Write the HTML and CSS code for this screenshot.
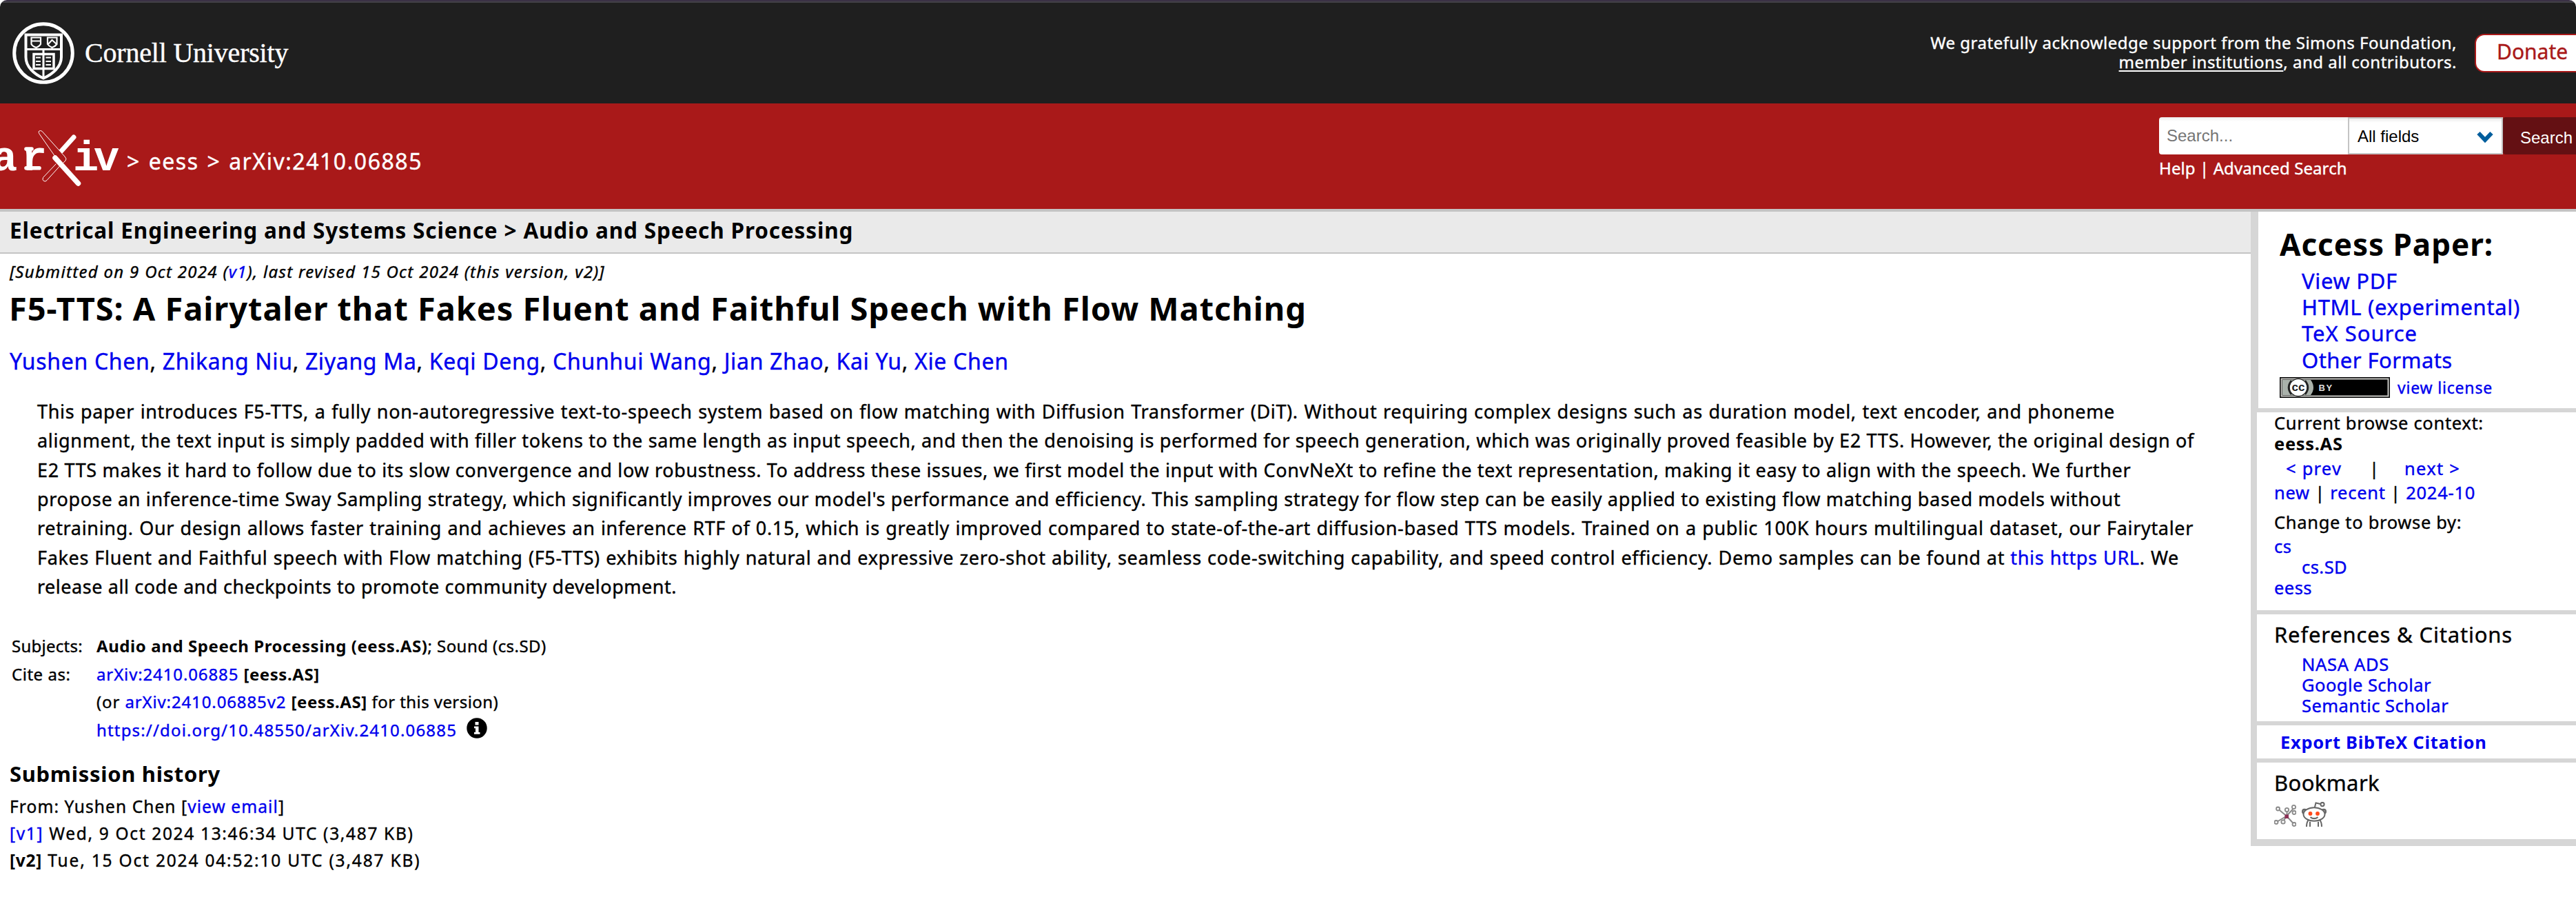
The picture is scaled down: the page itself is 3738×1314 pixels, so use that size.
FILE: index.html
```html
<!DOCTYPE html>
<html lang="en">
<head>
<meta charset="utf-8">
<title>[2410.06885] F5-TTS: A Fairytaler that Fakes Fluent and Faithful Speech with Flow Matching</title>
<link rel="stylesheet" href="styles.css">
</head>
<body>
<header>
  <div class="topbar">
    <a class="cornell" href="#">
      <svg class="seal" viewBox="0 0 90 90" fill="none" stroke="#fff">
        <circle cx="45" cy="45" r="42.3" stroke-width="5"/>
        <path d="M19.500 18.500H71V51C71 65 58 76 45 81.500C32 76 19.500 65 19.500 51Z" stroke-width="4"/>
        <path d="M20 39.500H71M45 40V80" stroke-width="3"/>
        <path d="M27.500 22.500H41V32Q39 35.500 34.500 37Q29 35 27.500 32ZM51 22.500H64.500V32Q62 35.500 57.500 37Q53 35 51 32Z" stroke-width="2.200"/>
        <path d="M28 27.500H41M52 32L57.500 26L64 32" stroke-width="2"/>
        <path d="M31 46.500H60V67.500H31Z" stroke-width="3.500"/>
        <path d="M34 51.500H41M34 57H41M34 62H41M48.500 51.500H56M48.500 57H56M48.500 62H56" stroke-width="2"/>
      </svg>
      <span class="cornell-name">Cornell University</span>
    </a>
    <div class="support">
      <div>We gratefully acknowledge support from the Simons Foundation,</div>
      <div><a href="#">member institutions</a>, and all contributors.</div>
    </div>
    <a class="donate" href="#">Donate</a>
  </div>
  <div class="redbar">
    <svg class="logo" viewBox="0 0 176 95" role="img" aria-label="arXiv">
      <g class="logo-text"><text x="-12" y="66.500">a</text><text x="31" y="66.500">r</text><text x="106" y="66.500">i</text><text x="136" y="66.500">v</text></g>
      <g fill="none" stroke-linecap="round" stroke-linejoin="round">
        <path d="M38 63.700H57M38 36H46" stroke="#fff" stroke-width="5.600"/>
        <path d="M107 19L89 39" stroke="#fff" stroke-width="7"/>
        <path d="M81 58L62.500 77.500Q61 81 63.500 82.500Q66 84 68 81.500L87.500 60" stroke="#fff" stroke-width="1"/>
        <path d="M57 14Q54.500 10 58.500 9.500Q61 9.500 62.500 12L94 47Q97.500 50.500 95 53L89 59L80 47Z" fill="#a91919" stroke="#fff" stroke-width="1"/>
        <path d="M80 49L113.500 86" stroke="#fff" stroke-width="7.500"/>
      </g>
    </svg>
    <div class="crumbs">&gt; <a href="#">eess</a> &gt; arXiv:2410.06885</div>
    <form class="search">
      <div class="search-row">
        <div class="field">Search...</div>
        <div class="select">All fields
          <svg viewBox="0 0 24 18" class="chev"><path d="M2.500 3L12 13L21.500 3" fill="none" stroke="#005e9d" stroke-width="6"/></svg>
        </div>
        <div class="submit">Search</div>
      </div>
      <div class="help"><a href="#">Help</a> | <a href="#">Advanced Search</a></div>
    </form>
  </div>
</header>
<div class="page">
  <main>
    <h1 class="subject-bar">Electrical Engineering and Systems Science &gt; Audio and Speech Processing</h1>
    <div class="body">
      <div class="dateline">[Submitted on 9 Oct 2024 (<a href="#">v1</a>), last revised 15 Oct 2024 (this version, v2)]</div>
      <h1 class="title">F5-TTS: A Fairytaler that Fakes Fluent and Faithful Speech with Flow Matching</h1>
      <div class="authors"><a href="#">Yushen Chen</a>, <a href="#">Zhikang Niu</a>, <a href="#">Ziyang Ma</a>, <a href="#">Keqi Deng</a>, <a href="#">Chunhui Wang</a>, <a href="#">Jian Zhao</a>, <a href="#">Kai Yu</a>, <a href="#">Xie Chen</a></div>
      <blockquote class="abstract">
        <span class="l1">This paper introduces F5-TTS, a fully non-autoregressive text-to-speech system based on flow matching with Diffusion Transformer (DiT). Without requiring complex designs such as duration model, text encoder, and phoneme</span>
        <span class="l2">alignment, the text input is simply padded with filler tokens to the same length as input speech, and then the denoising is performed for speech generation, which was originally proved feasible by E2 TTS. However, the original design of</span>
        <span class="l3">E2 TTS makes it hard to follow due to its slow convergence and low robustness. To address these issues, we first model the input with ConvNeXt to refine the text representation, making it easy to align with the speech. We further</span>
        <span class="l4">propose an inference-time Sway Sampling strategy, which significantly improves our model's performance and efficiency. This sampling strategy for flow step can be easily applied to existing flow matching based models without</span>
        <span class="l5">retraining. Our design allows faster training and achieves an inference RTF of 0.15, which is greatly improved compared to state-of-the-art diffusion-based TTS models. Trained on a public 100K hours multilingual dataset, our Fairytaler</span>
        <span class="l6">Fakes Fluent and Faithful speech with Flow matching (F5-TTS) exhibits highly natural and expressive zero-shot ability, seamless code-switching capability, and speed control efficiency. Demo samples can be found at <a href="#">this https URL</a>. We</span>
        <span class="l7">release all code and checkpoints to promote community development.</span>
      </blockquote>
      <div class="meta">
        <div class="label">Subjects:</div><div><b>Audio and Speech Processing (eess.AS)</b><span class="tight">; Sound (cs.SD)</span></div>
        <div class="label label-cite">Cite as:</div><div><a href="#">arXiv:2410.06885</a> <b>[eess.AS]</b></div>
        <div></div><div>(or <a href="#">arXiv:2410.06885v2</a> <b>[eess.AS]</b><span class="tight"> for this version)</span></div>
        <div></div><div class="doi"><a href="#">https://doi.org/10.48550/arXiv.2410.06885</a>
          <svg class="info" viewBox="0 0 30 30"><circle cx="15" cy="15" r="14.700"/><path d="M12.500 6H17.500V10.500H12.500ZM11 12.500H17.500V21H19.500V23.800H11V21H13V15.300H11Z" fill="#fff"/></svg>
        </div>
      </div>
      <h2 class="history-title">Submission history</h2>
      <div class="history">
        <div class="from">From: Yushen Chen [<a href="#">view email</a>]</div>
        <div><a href="#">[v1]</a> Wed, 9 Oct 2024 13:46:34 UTC (3,487 KB)</div>
        <div class="v2"><b>[v2]</b> Tue, 15 Oct 2024 04:52:10 UTC (3,487 KB)</div>
      </div>
    </div>
  </main>
  <aside>
    <section class="access">
      <h2>Access Paper:</h2>
      <ul>
        <li><a href="#">View PDF</a></li>
        <li><a href="#">HTML (experimental)</a></li>
        <li class="tex"><a href="#">TeX Source</a></li>
        <li class="other"><a href="#">Other Formats</a></li>
      </ul>
      <div class="license">
        <svg viewBox="0 0 160 30" class="badge">
          <rect width="160" height="30"/>
          <rect x="2.500" y="2.500" width="155" height="25" fill="none" stroke="#c8c8c4" stroke-width="2"/>
          <path d="M4 4H45Q53 15 45 26H4Z" fill="#aab2ab"/>
          <circle cx="27" cy="15" r="13"/>
          <ellipse cx="27" cy="15" rx="12.300" ry="12" fill="#fff"/>
          <path d="M17 5Q9 15 17 25M37 5Q45 15 37 25" fill="none" stroke="#222" stroke-width="2.500"/>
          <text x="17.500" y="20" class="cc">cc</text>
          <text x="56.500" y="19.700" class="by">BY</text>
        </svg>
        <a href="#">view license</a>
      </div>
    </section>
    <section class="browse">
      <div>Current browse context:</div>
      <div class="current"><b>eess.AS</b></div>
      <div class="prevnext"><a href="#">&lt; prev</a><span>|</span><a href="#">next &gt;</a></div>
      <div class="list"><a href="#">new</a> | <a href="#">recent</a> | <a href="#">2024-10</a></div>
      <div class="change">Change to browse by:</div>
      <div class="tree"><a href="#">cs</a><a class="sub" href="#">cs.SD</a><a href="#">eess</a></div>
    </section>
    <section class="refs">
      <h3>References &amp; Citations</h3>
      <ul>
        <li class="nasa"><a href="#">NASA ADS</a></li>
        <li><a href="#">Google Scholar</a></li>
        <li><a href="#">Semantic Scholar</a></li>
      </ul>
    </section>
    <section class="export"><a href="#">Export BibTeX Citation</a></section>
    <section class="bookmark">
      <h3>Bookmark</h3>
      <div class="icons">
        <svg class="bibsonomy" viewBox="0 0 32 31" fill="none" stroke="#8a8a8a">
          <path d="M18 16L6 6M18 16L19 8M18 16L29 4M18 16L3 25M18 16L13 24M18 16L29 28" stroke-width="2"/>
          <g stroke-width="1.800" fill="#fff"><circle cx="5.500" cy="5.500" r="2.500"/><circle cx="18.500" cy="7" r="2.700"/><circle cx="28.500" cy="3" r="2.600"/><circle cx="29" cy="11" r="2.500"/><circle cx="3" cy="25" r="2.500"/><circle cx="13" cy="24.500" r="2.700"/><circle cx="29" cy="28" r="2.500"/></g>
          <rect x="15.500" y="14" width="5.500" height="5.500" fill="#8c2f55" stroke="none"/>
        </svg>
        <svg class="reddit" viewBox="0 0 36 35" preserveAspectRatio="none" fill="none" stroke="#666" stroke-width="2">
          <path d="M18.500 9L20.500 1.500L27 3"/><circle cx="30" cy="3.500" r="2.600"/>
          <path d="M10 25Q7 29 7 35M26 25Q29 29 29 35M12 28V35M24 28V35"/>
          <circle cx="4" cy="13.500" r="3" fill="#999"/><circle cx="32" cy="13.500" r="3" fill="#999"/>
          <ellipse cx="18" cy="17.500" rx="15.500" ry="9.500" fill="#fff"/>
          <path d="M12.500 21.500Q18 25.500 23.500 21.500"/>
          <g fill="#ff4a1c" stroke="none"><circle cx="12.500" cy="16.500" r="2.900"/><circle cx="23" cy="16.500" r="2.900"/></g>
        </svg>
      </div>
    </section>
  </aside>
</div>
</body>
</html>
```
FILE: styles.css
```css
* { box-sizing: border-box; }
body {
  margin: 0;
  height: 1314px;
  overflow: hidden;
  background: #fff;
  color: #000;
  font-family: "Noto Sans", "Open Sans", sans-serif;
  font-weight: 400;
  -webkit-text-stroke: 0.4px;
  white-space: nowrap;
}
h1, h2, h3, ul, blockquote { margin: 0; padding: 0; }
h1, h2, b, svg, .search-row { -webkit-text-stroke: 0; }
ul { list-style: none; }
svg { display: block; }
a { color: #0000ee; text-decoration: none; }

/* Cornell banner */
header { background: #fff; }
.topbar {
  height: 150px;
  display: flex;
  align-items: flex-start;
  background: linear-gradient(#3a3145 2px, #424046 2px, #424046 4px, #1f1f1f 4px);
  border-radius: 10px 10px 0 0;
  color: #fff;
}
.cornell { display: flex; gap: 15px; margin: 32px 0 0 18px; color: #fff; }
.seal { width: 90px; height: 90px; }
.cornell-name {
  font: 400 40px/90px "Liberation Serif", serif;
  letter-spacing: -0.005em;
}
.support {
  margin: 48px 26px 0 auto;
  font-size: 24px;
  line-height: 28px;
  letter-spacing: 0.0205em;
  text-align: right;
}
.support a { color: #fff; text-decoration: underline; text-underline-offset: 3px; }
.donate {
  width: 147px;
  height: 56px;
  margin-top: 49px;
  padding-left: 30px;
  border: 2px solid #a91919;
  border-right: 0;
  border-radius: 14px 0 0 14px;
  background: #fff;
  color: #a91919;
  font-size: 30px;
  line-height: 47px;
}

/* arXiv bar */
.redbar {
  height: 157px;
  display: flex;
  align-items: flex-start;
  background: #a91919;
  border-bottom: 4px solid #c4c4c4;
  color: #fff;
}
.logo { width: 176px; height: 95px; margin-top: 30px; }
.logo-text { fill: #fff; font: bold 62px "Liberation Mono", monospace; }
.crumbs {
  margin: 64px 0 0 8px;
  font-size: 32px;
  line-height: 40px;
  letter-spacing: 0.0479em;
  word-spacing: 2px;
}
.crumbs a, .help a { color: #fff; }
.search { width: 605px; margin: 20px 0 0 auto; }
.search-row {
  display: flex;
  height: 54px;
  font: 24px/53px "Liberation Sans", sans-serif;
}
.field {
  width: 274px;
  padding-left: 11px;
  background: linear-gradient(#ededed, #fff 6px);
  border-radius: 4px 0 0 4px;
  color: #757575;
}
.select {
  width: 225px;
  display: flex;
  align-items: center;
  justify-content: space-between;
  padding: 0 12px 0;
  border: 2px solid #c4c4c4;
  background: linear-gradient(#ededed, #fff 6px);
  color: #000;
}
.chev { width: 24px; height: 18px; margin-top: 4px; }
.submit {
  flex: 1;
  padding-left: 25px;
  border-radius: 4px 0 0 4px;
  background: #641013;
  line-height: 60px;
}
.help { margin-top: 5px; font-size: 24px; line-height: 30px; letter-spacing: 0.004em; }

/* Main column */
.page { display: flex; align-items: flex-start; }
main { width: 3266px; }
.subject-bar {
  height: 61px;
  padding-left: 14px;
  background: #eaeaea;
  border-bottom: 2px solid #c4c4c4;
  font-size: 31.500px;
  line-height: 53px;
  letter-spacing: 0.027em;
}
.body { padding-left: 14px; }
.dateline { font-size: 24px; line-height: 51px; font-style: italic; letter-spacing: 0.0545em; }
.title { margin-left: -1px; font-size: 47px; line-height: 57px; letter-spacing: 0.02em; }
.authors { margin-top: 28px; font-size: 32px; line-height: 40px; letter-spacing: 0.0211em; }
.abstract {
  margin: 32px 0 0 40px;
  font-size: 27px;
  line-height: 42.330px;
  letter-spacing: 0.0245em;
}
.abstract span { display: block; text-align-last: justify; }
.abstract .l1 { width: 3015px; }
.abstract .l2 { width: 3128px; }
.abstract .l3 { width: 3038px; }
.abstract .l4 { width: 3018px; }
.abstract .l5 { width: 3129px; }
.abstract .l6 { width: 3108px; }
.abstract .l7 { width: 928px; letter-spacing: 0.019em; }
.meta {
  display: grid;
  grid-template-columns: 123px auto;
  margin: 45px 0 0 3px;
  font-size: 24px;
  line-height: 40.400px;
  letter-spacing: 0.0365em;
}
.meta b { letter-spacing: 0.024em; }
.meta .label { letter-spacing: 0.011em; }
.meta .label-cite { letter-spacing: 0.022em; }
.tight { letter-spacing: 0.018em; }
.doi { display: flex; gap: 14px; letter-spacing: 0.0486em; }
.info { width: 30px; height: 30px; margin-top: 2px; }
.history-title { margin-top: 23px; font-size: 31px; line-height: 40px; letter-spacing: 0.022em; }
.history { margin-top: 8px; font-size: 24.500px; line-height: 39.200px; letter-spacing: 0.068em; }
.history .from { letter-spacing: 0.0444em; }
.history .v2 { letter-spacing: 0.074em; }
.history b { letter-spacing: 0.03em; }

/* Sidebar */
aside {
  flex: 1;
  border-left: 9px solid #d6d6d6;
  font-size: 25.500px;
  letter-spacing: 0.0265em;
}
section { border-bottom: 6px solid #d6d6d6; padding-left: 25px; }
h3 { font-size: 31px; font-weight: 400; line-height: 36px; letter-spacing: 0.0266em; }
.access { height: 291px; padding: 20px 0 0 31px; border-left: 2px solid #d6d6d6; }
.access h2 { font-size: 44px; line-height: 54px; letter-spacing: 0.022em; }
.access ul { margin: 7px 0 0 32px; font-size: 31px; line-height: 38.200px; letter-spacing: 0.022em; }
.access .tex { letter-spacing: 0.0314em; }
.access .other { letter-spacing: 0.014em; }
.license {
  display: flex;
  align-items: center;
  gap: 11px;
  margin-top: 6px;
  font-size: 23px;
  line-height: 30px;
  letter-spacing: 0.0352em;
}
.badge { width: 160px; height: 30px; }
.cc { font: bold 17px "Liberation Sans", sans-serif; fill: #222; letter-spacing: 0; }
.by { font: bold 13px "Liberation Sans", sans-serif; fill: #ddd; letter-spacing: 1.500px; }
.browse { height: 293px; line-height: 30px; }
.prevnext { display: flex; margin: 6px 0 0 17px; letter-spacing: 0.048em; }
.prevnext span { width: 12px; margin: 0 39px 0 40px; }
.list { margin-top: 5px; letter-spacing: 0.0285em; }
.change { margin-top: 13px; }
.tree { display: flex; flex-direction: column; margin-top: 5px; letter-spacing: 0.018em; }
.tree .sub { margin-left: 40px; }
.refs { height: 161px; padding-top: 11px; }
.refs ul { margin: 10px 0 0 40px; line-height: 30px; letter-spacing: 0.018em; }
.refs .nasa { letter-spacing: 0.027em; }
.export { height: 54px; padding-left: 34px; font-weight: 700; line-height: 48px; letter-spacing: 0.027em; -webkit-text-stroke: 0; }
.bookmark { height: 121px; padding-top: 11px; border-bottom-width: 10px; }
.bookmark h3 { letter-spacing: 0.0123em; }
.icons { display: flex; align-items: flex-end; gap: 8px; margin-top: 10px; }
.bibsonomy { width: 32px; height: 32px; }
.reddit { width: 36px; height: 36px; }
```
